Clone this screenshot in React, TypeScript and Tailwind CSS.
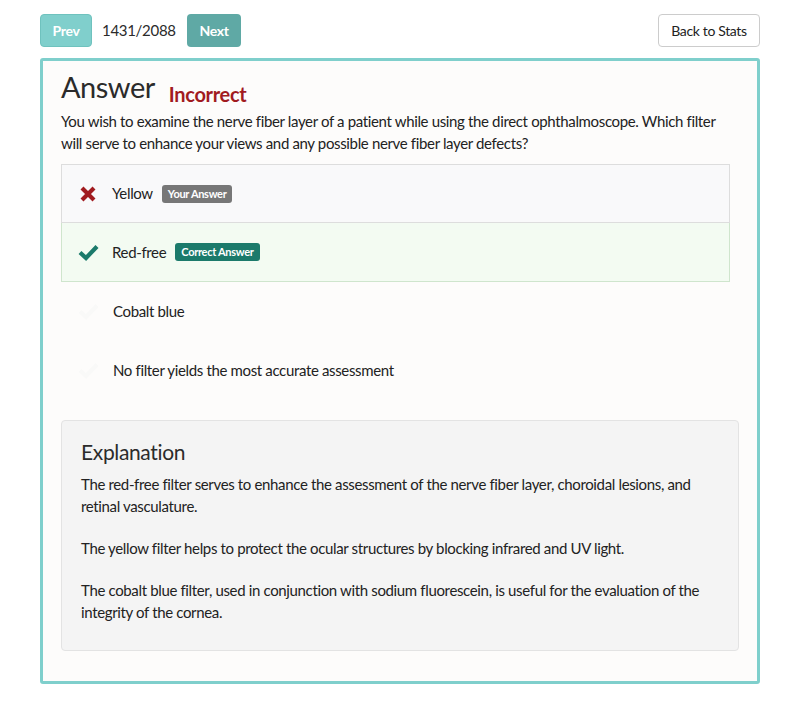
import React from "react"

const choices = [
  { text: "Yellow", state: "wrong" },
  { text: "Red-free", state: "correct" },
  { text: "Cobalt blue", state: "none" },
  { text: "No filter yields the most accurate assessment", state: "none" },
]

function Cross() {
  return (
    <svg width="18" height="18" viewBox="0 0 18 18">
      <path d="M3 3 L15 15 M15 3 L3 15" stroke="#a11b1f" strokeWidth="4.2" strokeLinecap="butt" />
    </svg>
  )
}

function Check({ color }: { color: string }) {
  return (
    <svg width="21" height="17" viewBox="0 0 21 17">
      <path d="M2 8.5 L8 14 L19 2.5" stroke={color} strokeWidth="4.2" fill="none" strokeLinejoin="miter" />
    </svg>
  )
}

export default function App() {
  return (
    <div className="min-h-[708px] bg-white text-[#2b2b2b] tracking-[-0.35px]" style={{ fontFamily: "Lato, 'Open Sans', sans-serif" }}>
      <div className="px-10 pt-[14px]">
        {/* Top nav */}
        <div className="flex items-center justify-between">
          <div className="flex items-center">
            <button className="h-[33px] w-[52px] rounded-[4px] border border-[#6fc2be] bg-[#80cfcc] text-[14px] font-bold text-white">
              Prev
            </button>
            <span className="ml-[10px] mr-[10px] w-[75px] whitespace-nowrap text-[15px] tracking-[-0.3px] text-[#2b2b2b]">1431/2088</span>
            <button className="h-[33px] w-[54px] rounded-[4px] bg-[#5fa9a5] text-[14px] font-bold text-white">
              Next
            </button>
          </div>
          <button className="h-[33px] w-[102px] rounded-[4px] border border-[#cccccc] bg-white text-[14px] text-[#222]">
            Back to Stats
          </button>
        </div>

        {/* Panel */}
        <div className="mt-[11px] h-[626px] rounded-[3px] border-[3px] border-[#7fcfcc] bg-[#fdfcfb] pl-[18px] pr-[18px] pt-[6px]">
          <div className="flex items-end">
            <h1 className="text-[29px] leading-[40px] tracking-[-0.5px] text-[#2b2b2b]">Answer</h1>
            <span className="-mb-[1px] ml-[14px] text-[20px] font-bold leading-[28px] tracking-[-0.3px] text-[#a11b1f]">Incorrect</span>
          </div>
          <p className="mt-[3px] w-[668px] text-[15px] leading-[22px] text-[#222]">
            You wish to examine the nerve fiber layer of a patient while using the direct ophthalmoscope. Which filter will serve to enhance your views and any possible nerve fiber layer defects?
          </p>

          <div className="mt-[10px] w-[669px]">
            {choices.map((c, i) => {
              const box =
                c.state === "wrong"
                  ? "border border-[#dddddd] bg-[#f9f9fa]"
                  : c.state === "correct"
                    ? "border border-t-0 border-[#cfe5cd] bg-[#f3fbf2]"
                    : "border border-transparent"
              return (
                <div key={i} className={`flex h-[59px] items-center ${box}`}>
                  <div className="flex w-[50px] justify-center pl-[2px]">
                    {c.state === "wrong" ? (
                      <Cross />
                    ) : c.state === "correct" ? (
                      <Check color="#1b7a6b" />
                    ) : (
                      <Check color="#f9f9f8" />
                    )}
                  </div>
                  <span className={`text-[15px] text-[#222] ${c.state === "none" ? "ml-[1px]" : ""}`}>{c.text}</span>
                  {c.state === "wrong" && (
                    <span className="ml-[9px] rounded-[3px] bg-[#777777] px-[6px] py-[2px] text-[11px] font-bold leading-[14px] tracking-[-0.3px] text-white">
                      Your Answer
                    </span>
                  )}
                  {c.state === "correct" && (
                    <span className="ml-[9px] rounded-[3px] bg-[#1b7a6b] px-[6px] py-[2px] text-[11px] font-bold leading-[14px] tracking-[-0.3px] text-white">
                      Correct Answer
                    </span>
                  )}
                </div>
              )
            })}
          </div>

          {/* Explanation */}
          <div className="mt-[20px] h-[231px] rounded-[4px] border border-[#e3e3e3] bg-[#f4f4f4] px-[19px] pt-[18px]">
            <h2 className="text-[21px] leading-[26px] text-[#2b2b2b]">Explanation</h2>
            <div className="mt-[8px] space-y-[20px] text-[15px] leading-[22px] text-[#222]">
              <p>The red-free filter serves to enhance the assessment of the nerve fiber layer, choroidal lesions, and retinal vasculature.</p>
              <p>The yellow filter helps to protect the ocular structures by blocking infrared and UV light.</p>
              <p>The cobalt blue filter, used in conjunction with sodium fluorescein, is useful for the evaluation of the integrity of the cornea.</p>
            </div>
          </div>
        </div>
      </div>
    </div>
  )
}
